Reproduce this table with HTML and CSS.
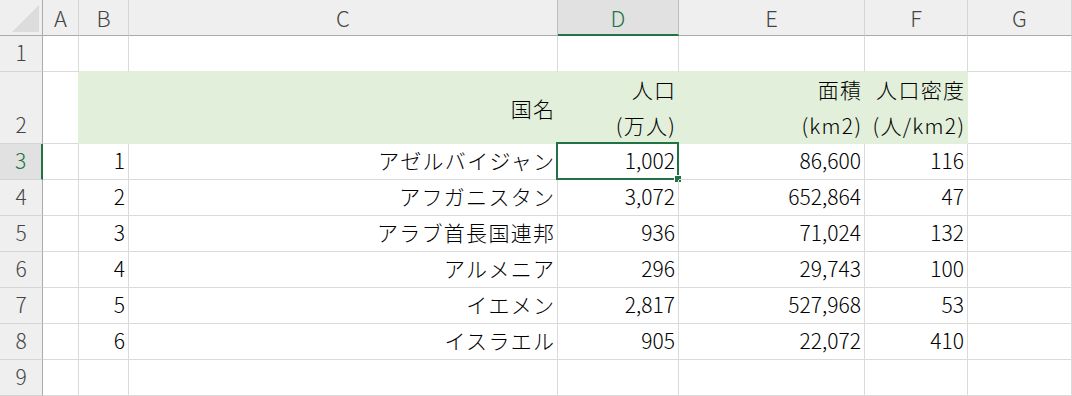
FILE: index.html
```html
<!DOCTYPE html>
<html lang="ja">
<head>
<meta charset="utf-8">
<title>Sheet</title>
<link rel="stylesheet" href="styles.css">
</head>
<body>
<div class="sheet">
  <div class="corner"><svg width="42" height="35" viewBox="0 0 42 35"><polygon points="12,32 39,32 39,5" fill="#dcdcdc"/></svg></div>
  <div class="ch">A</div>
  <div class="ch">B</div>
  <div class="ch before-sel">C</div>
  <div class="ch sel">D</div>
  <div class="ch">E</div>
  <div class="ch">F</div>
  <div class="ch">G</div>

  <div class="rh">1</div>
  <div class="c"></div>
  <div class="c gb"></div>
  <div class="c gb"></div>
  <div class="c gb"></div>
  <div class="c gb"></div>
  <div class="c gb"></div>
  <div class="c"></div>

  <div class="rh">2</div>
  <div class="c gr"></div>
  <div class="c fill"></div>
  <div class="c fill mid"><span class="jp">国名</span></div>
  <div class="c fill two"><span class="jp">人口</span><span class="jp">(万人)</span></div>
  <div class="c fill two"><span class="jp">面積</span><span class="jp">(km2)</span></div>
  <div class="c fill two"><span class="jp">人口密度</span><span class="jp">(人/km2)</span></div>
  <div class="c"></div>

  <div class="rh sel">3</div>
  <div class="c"></div>
  <div class="c">1</div>
  <div class="c"><span class="jp">アゼルバイジャン</span></div>
  <div class="c active">1,002<div class="selbox"><div class="handle"></div></div></div>
  <div class="c">86,600</div>
  <div class="c">116</div>
  <div class="c"></div>

  <div class="rh">4</div>
  <div class="c"></div>
  <div class="c">2</div>
  <div class="c"><span class="jp">アフガニスタン</span></div>
  <div class="c">3,072</div>
  <div class="c">652,864</div>
  <div class="c">47</div>
  <div class="c"></div>

  <div class="rh">5</div>
  <div class="c"></div>
  <div class="c">3</div>
  <div class="c"><span class="jp">アラブ首長国連邦</span></div>
  <div class="c">936</div>
  <div class="c">71,024</div>
  <div class="c">132</div>
  <div class="c"></div>

  <div class="rh">6</div>
  <div class="c"></div>
  <div class="c">4</div>
  <div class="c"><span class="jp">アルメニア</span></div>
  <div class="c">296</div>
  <div class="c">29,743</div>
  <div class="c">100</div>
  <div class="c"></div>

  <div class="rh">7</div>
  <div class="c"></div>
  <div class="c">5</div>
  <div class="c"><span class="jp">イエメン</span></div>
  <div class="c">2,817</div>
  <div class="c">527,968</div>
  <div class="c">53</div>
  <div class="c"></div>

  <div class="rh">8</div>
  <div class="c"></div>
  <div class="c">6</div>
  <div class="c"><span class="jp">イスラエル</span></div>
  <div class="c">905</div>
  <div class="c">22,072</div>
  <div class="c">410</div>
  <div class="c"></div>

  <div class="rh">9</div>
  <div class="c"></div>
  <div class="c"></div>
  <div class="c"></div>
  <div class="c"></div>
  <div class="c"></div>
  <div class="c"></div>
  <div class="c"></div>
</div>
</body>
</html>
```

FILE: styles.css
```css
* { box-sizing: border-box; }
html, body { margin: 0; padding: 0; background: #ffffff; }
body {
  font-family: "Noto Sans CJK JP", "Noto Sans", sans-serif;
  font-size: 21px;
  font-weight: 300;
  color: #000;
}
.sheet {
  display: grid;
  grid-template-columns: 43px 36px 50px 429px 121px 186px 103px 104px;
  grid-template-rows: 36px 36px 72px repeat(7, 36px);
  width: 1072px;
  height: 396px;
  overflow: hidden;
}
.corner {
  background: #efefef;
  border-right: 1px solid #ababab;
  border-bottom: 1px solid #ababab;
}
.corner svg { display: block; }
.ch {
  background: #efefef;
  color: #444;
  border-right: 1px solid #d5d5d5;
  border-bottom: 1px solid #ababab;
  display: flex;
  justify-content: center;
  align-items: flex-end;
  line-height: 30px;
  padding-bottom: 3px;
  font-size: 22px;
}
.ch.before-sel { border-right-color: #bdbdbd; }
.ch.sel {
  background: #e1e1e1;
  color: #217346;
  border-right-color: #bdbdbd;
  border-bottom: 2px solid #217346;
  padding-bottom: 2px;
}
.rh {
  background: #efefef;
  color: #444;
  border-right: 1px solid #ababab;
  border-bottom: 1px solid #d5d5d5;
  display: flex;
  justify-content: center;
  align-items: flex-end;
  line-height: 30px;
  padding-bottom: 4px;
}
.rh.sel {
  background: #e1e1e1;
  color: #217346;
  border-right: 2px solid #217346;
}
.c {
  position: relative;
  border-right: 1px solid #dadada;
  border-bottom: 1px solid #dadada;
  display: flex;
  justify-content: flex-end;
  align-items: flex-end;
  line-height: 30px;
  padding: 0 3px 4px 0;
  white-space: nowrap;
}
.jp {
  letter-spacing: 1.3px;
  margin-right: -1.3px;
}
.c.gb { border-bottom-color: #e2efda; }
.c.gr { border-right-color: #e2efda; }
.c.fill {
  background: #e2efda;
  border-right-color: #e2efda;
  border-bottom-color: #e2efda;
}
.c.mid { align-items: center; padding-bottom: 0; }
.c.two {
  flex-direction: column;
  align-items: flex-end;
  justify-content: flex-end;
  line-height: 36px;
  padding-bottom: 0;
}
.selbox {
  position: absolute;
  top: -2px;
  left: -2px;
  right: -1px;
  bottom: -1px;
  border: 2px solid #217346;
  pointer-events: none;
}
.handle {
  position: absolute;
  right: -5px;
  bottom: -5px;
  width: 8px;
  height: 8px;
  background: #217346;
  border: 1px solid #ffffff;
}
```
